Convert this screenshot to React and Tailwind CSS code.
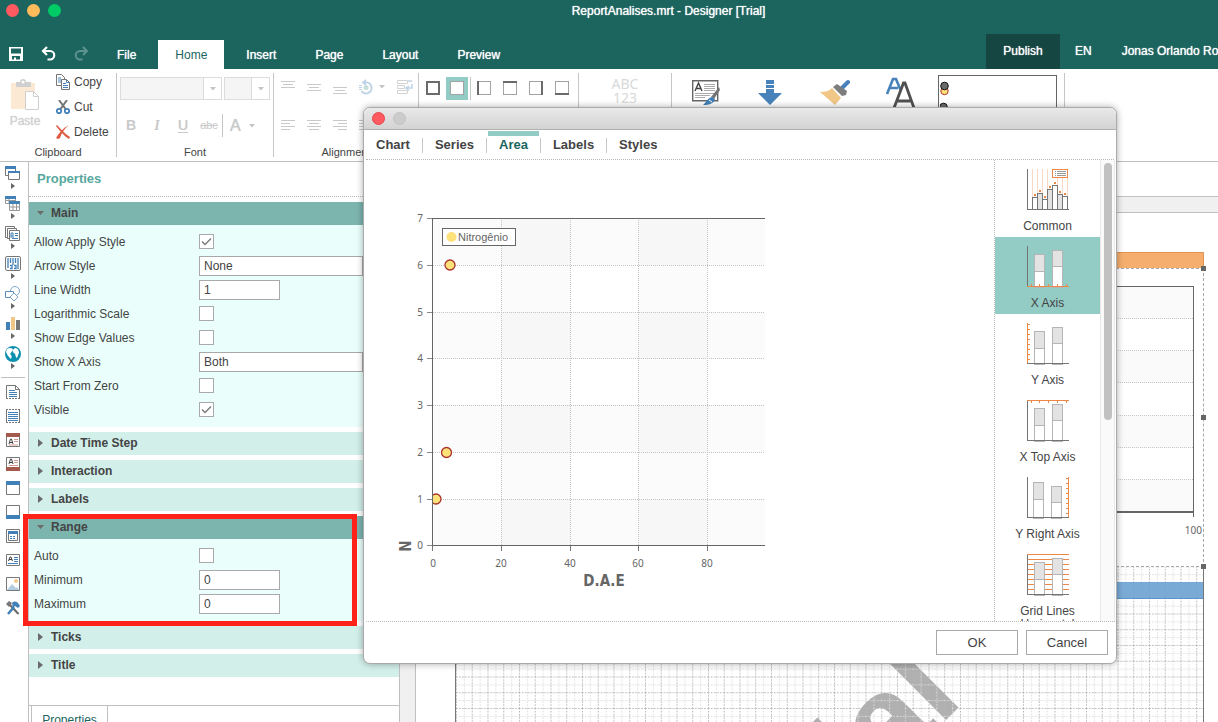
import { useState } from 'react';
import clsx from 'clsx';

const tabs = ['File', 'Home', 'Insert', 'Page', 'Layout', 'Preview'];
const dialogTabs = ['Chart', 'Series', 'Area', 'Labels', 'Styles'];

const sections = [
  {
    title: 'Main',
    open: true,
    rows: [
      { label: 'Allow Apply Style', type: 'check', value: true },
      { label: 'Arrow Style', type: 'select', value: 'None' },
      { label: 'Line Width', type: 'text', value: '1' },
      { label: 'Logarithmic Scale', type: 'check', value: false },
      { label: 'Show Edge Values', type: 'check', value: false },
      { label: 'Show X Axis', type: 'select', value: 'Both' },
      { label: 'Start From Zero', type: 'check', value: false },
      { label: 'Visible', type: 'check', value: true }
    ]
  },
  { title: 'Date Time Step' },
  { title: 'Interaction' },
  { title: 'Labels' },
  {
    title: 'Range',
    open: true,
    rows: [
      { label: 'Auto', type: 'check', value: false },
      { label: 'Minimum', type: 'text', value: '0' },
      { label: 'Maximum', type: 'text', value: '0' }
    ]
  },
  { title: 'Ticks' },
  { title: 'Title' }
];

function Svg({ w, h, children, className }) {
  return (
    <svg width={w} height={h} viewBox={`0 0 ${w} ${h}`} fill="none" className={clsx('shrink-0', className)} aria-hidden="true">
      {children}
    </svg>
  );
}

function Caret({ className }) {
  return (
    <Svg w={6} h={4} className={className}>
      <path d="M0 0h6L3 3.5z" fill="#c4c4c4" />
    </Svg>
  );
}

/* ---------- header ---------- */

function Header() {
  return (
    <header className="shrink-0 bg-[#1b655e] text-xs text-white">
      <div className="flex h-[34px] items-start">
        <div className="flex gap-[8px] pl-[6px] pt-[4px]">
          <span className="size-[13px] rounded-full bg-[#ff5a5f]" />
          <span className="size-[13px] rounded-full bg-[#ffbb5c]" />
          <span className="size-[13px] rounded-full bg-[#00cc66]" />
        </div>
        <h1 className="flex-1 pl-[58px] pt-[3px] text-center [text-shadow:0_0_1px_#ffffff]">ReportAnalises.mrt - Designer [Trial]</h1>
      </div>
      <div className="flex h-[35px] items-stretch">
        <div className="flex w-[100px] items-center gap-[18px] pl-[9px] pt-[4px]">
          <button type="button" aria-label="Save">
            <Svg w={14} h={14}>
              <path d="M0 0h14v14H0z" fill="#fff" />
              <path d="M2 1.500h10v5H2zM3 9h8v3.500H3z" fill="#1b655e" />
              <path d="M5 10.500h2v2.500H5z" fill="#fff" />
            </Svg>
          </button>
          <button type="button" aria-label="Undo">
            <Svg w={15} h={15}>
              <path d="M6 1L2 5l4 4M2 5h7a4 4 0 0 1 0 8.500H6.500" stroke="#fff" strokeWidth="2.200" />
            </Svg>
          </button>
          <button type="button" aria-label="Redo">
            <Svg w={15} h={15}>
              <path d="M9 1l4 4-4 4M13 5H6a4 4 0 0 0 0 8.500h2.500" stroke="#5f938e" strokeWidth="2" />
            </Svg>
          </button>
        </div>
        <nav className="flex gap-[5px] pt-[6px]">
          {tabs.map((tab) => (
            <button
              type="button"
              key={tab}
              className={clsx(
                'px-[17px]',
                tab === 'Home' ? 'bg-white text-[#1b655e]' : '[text-shadow:0_0_1px_#ffffff]'
              )}
            >
              {tab}
            </button>
          ))}
        </nav>
        <div className="ml-auto flex w-[232px] shrink-0 overflow-hidden whitespace-nowrap pb-px [&>button]:[text-shadow:0_0_1px_#ffffff]">
          <button type="button" className="-mb-px w-[74px] shrink-0 bg-[#154641] pb-px">Publish</button>
          <button type="button" className="px-[15px]">EN</button>
          <button type="button" className="pl-[15px]">Jonas Orlando Ro</button>
        </div>
      </div>
    </header>
  );
}

/* ---------- ribbon ---------- */

function Group({ label, className, children }) {
  return (
    <section className={clsx('flex h-[84px] shrink-0 flex-col border-r border-[#c6c6c6]', className)}>
      <div className="flex-1">{children}</div>
      {label && <h2 className="h-[10px] text-center text-[11px] leading-[10px]">{label}</h2>}
    </section>
  );
}

function Lines({ rows }) {
  return (
    <Svg w={14} h={14}>
      {rows.map(([x, y, w]) => (
        <path key={y} d={`M${x} ${y}h${w}v1h${-w}z`} fill="#c9c9c9" shapeRendering="crispEdges" />
      ))}
    </Svg>
  );
}

const valign = [
  [[0, 1, 14], [2, 4, 10], [0, 7, 14]],
  [[0, 4, 14], [2, 7, 10], [0, 10, 14]],
  [[0, 7, 14], [2, 10, 10], [0, 13, 14]]
];
const halign = [
  [[0, 1, 14], [0, 4, 9], [0, 7, 14], [0, 10, 9]],
  [[0, 1, 14], [2, 4, 10], [0, 7, 14], [2, 10, 10]],
  [[0, 1, 14], [5, 4, 9], [0, 7, 14], [5, 10, 9]],
  [[0, 1, 14], [0, 4, 14], [0, 7, 14], [0, 10, 14]]
];

function BorderIcon({ side }) {
  const edges = {
    left: 'M0 0h2v14H0z',
    top: 'M0 0h14v2H0z',
    right: 'M12 0h2v14h-2z',
    bottom: 'M0 12h14v2H0z'
  };
  return (
    <Svg w={14} h={14}>
      <g shapeRendering="crispEdges">
        <path d="M0 0h14v14H0zM1 1v12h12V1z" fill="#a3a3a3" fillRule="evenodd" />
        {side === 'all' && <path d="M0 0h14v14H0zM2 2v10h10V2z" fill="#6b6b6b" fillRule="evenodd" />}
        {side === 'none' && <path d="M1 1h12v12H1z" fill="#fff" />}
        {edges[side] && <path d={edges[side]} fill="#6b6b6b" />}
      </g>
    </Svg>
  );
}

function Ribbon() {
  return (
    <div className="flex h-[93px] shrink-0 overflow-hidden border-b border-[#c0c0c0] bg-white pt-[4px] text-[#444]">
      <Group label="Clipboard" className="w-[117px]">
        <div className="flex">
          <button type="button" disabled className="flex w-[50px] flex-col items-center gap-[2px] pt-[6px] text-xs text-[#d0d0d0]">
            <Svg w={30} h={32}>
              <path d="M1 4h24v26H1z" fill="#fbe9d3" />
              <path d="M6 3h4a3 3 0 0 1 6 0h5v5H6z" fill="#d0d0d0" />
              <circle cx="13" cy="3" r="1.500" fill="#fff" />
              <path d="M15.500 12.500h8l5 5v13h-13z" fill="#fff" stroke="#cfcfcf" />
              <path d="M23.500 12.500v5h5" stroke="#cfcfcf" />
            </Svg>
            <span className="[text-shadow:0_0_1px_#d0d0d0]">Paste</span>
          </button>
          <div className="-mt-[4px] flex flex-col pl-[2px] text-xs">
            <button type="button" className="flex h-[25px] items-center gap-[4px] pl-[4px]">
              <Svg w={14} h={16}>
                <path d="M.5.5h5l3 3v8h-8z" fill="#fff" stroke="#757575" />
                <path d="M2 4h3M2 6h4M2 8h4" stroke="#4a80b8" />
                <path d="M5.500 5.500h5l3 3v7h-8z" fill="#fff" stroke="#757575" />
                <path d="M10.500 5.500v3h3M7 9.500h3M7 11.500h5M7 13.500h5" stroke="#4a80b8" />
              </Svg>
              Copy
            </button>
            <button type="button" className="flex h-[25px] items-center gap-[4px] pl-[4px]">
              <Svg w={14} h={14}>
                <path d="M3 0l6.500 9M11 0L4.500 9" stroke="#757575" strokeWidth="2" />
                <circle cx="3" cy="11" r="2.200" stroke="#4280b8" strokeWidth="1.800" />
                <circle cx="11" cy="11" r="2.200" stroke="#4280b8" strokeWidth="1.800" />
              </Svg>
              Cut
            </button>
            <button type="button" className="flex h-[25px] items-center gap-[4px] pl-[4px]">
              <Svg w={14} h={14}>
                <path d="M1 0c4 4 8 9 13 12l-1 2C8 11 4 6 0 1zM13 0C9 3 6 7 4 13l-2 1-2-1C3 8 7 3 13 0z" fill="#de5b3f" />
              </Svg>
              Delete
            </button>
          </div>
        </div>
      </Group>

      <Group label="Font" className="w-[157px] text-[#c9c9c9] [&>h2]:text-[#444]">
        <div className="flex gap-[2px] pl-[3px] pt-[4px]">
          <button type="button" disabled aria-label="Font name" className="flex h-[23px] w-[102px] border border-[#dcdcdc] bg-[#f5f5f5]">
            <span className="ml-auto flex h-full w-[18px] items-center justify-center border-l border-[#dcdcdc] bg-white"><Caret /></span>
          </button>
          <button type="button" disabled aria-label="Font size" className="flex h-[23px] w-[46px] border border-[#dcdcdc] bg-[#f5f5f5]">
            <span className="ml-auto flex h-full w-[18px] items-center justify-center border-l border-[#dcdcdc] bg-white"><Caret /></span>
          </button>
        </div>
        <div className="flex items-center pl-px pt-[14px] text-sm leading-[23px]">
          <button type="button" disabled className="w-[26px] font-bold">B</button>
          <button type="button" disabled className="w-[26px] font-['Liberation_Serif',serif] font-bold italic">I</button>
          <button type="button" disabled className="w-[26px] underline underline-offset-2 [text-shadow:0_0_1px_#c9c9c9]">U</button>
          <button type="button" disabled className="w-[26px] text-[11px] line-through">abc</button>
          <span className="h-[23px] w-px bg-[#c6c6c6]" />
          <button type="button" disabled className="flex items-center gap-[8px] pl-[7px] text-base leading-[20px] [text-shadow:0_0_1px_#c9c9c9]">
            A <Caret />
          </button>
        </div>
      </Group>

      <Group label="Alignment" className="w-[145px]">
        <div className="flex h-[28px] items-center gap-[12px] pl-[7px]">
          {valign.map((rows, i) => (
            <button type="button" disabled key={i} aria-label={['Top', 'Middle', 'Bottom'][i]}><Lines rows={rows} /></button>
          ))}
          <button type="button" disabled aria-label="Angle" className="flex items-center gap-[6px]">
            <Svg w={14} h={16}>
              <circle cx="7" cy="8.500" r="2.500" fill="#c5e0da" />
              <path d="M6 3.500A5.500 5.500 0 1 1 2.500 12" stroke="#bfd3e6" strokeWidth="2" />
              <path d="M7 0v7L2.500 3.500z" fill="#bfd3e6" />
              <path d="M0 6.500h3M0 8.500h3M0 10.500h3" stroke="#bfd3e6" />
            </Svg>
            <Caret />
          </button>
          <button type="button" disabled aria-label="Word wrap">
            <Svg w={16} h={16}>
              <path d="M.5 1.500h10v3H.5zM.5 6.500h7v3h-7zM.5 11.500h10v3H.5z" stroke="#d3d3d3" />
              <path d="M11 2h4M15 5v4h-5M12 7l-3 2 3 2.500" stroke="#bfd3e6" strokeWidth="1.500" />
            </Svg>
          </button>
        </div>
        <div className="flex gap-[12px] pl-[7px] pt-[18px]">
          {halign.map((rows, i) => (
            <button type="button" disabled key={i} aria-label={['Left', 'Center', 'Right', 'Width'][i]}><Lines rows={rows} /></button>
          ))}
        </div>
      </Group>

      <Group className="w-[160px]">
        <div className="mt-[4px] flex h-[23px] items-center pl-px">
          {['all', 'none', 'left', 'top', 'right', 'bottom'].map((side) => (
            <button
              type="button"
              key={side}
              aria-label={`Border ${side}`}
              className={clsx(
                'flex h-full items-center justify-center pb-px',
                side === 'all' && 'w-[26px]',
                side === 'none' && 'mr-[2px] w-[22px] bg-[#93cbc5]',
                side === 'left' && 'w-[27px] border-l border-[#c6c6c6]',
                ['top', 'right', 'bottom'].includes(side) && 'w-[26px]'
              )}
            >
              <BorderIcon side={side} />
            </button>
          ))}
        </div>
      </Group>

      <Group className="w-[93px]">
        <button type="button" disabled className="flex w-full flex-col items-center pt-[4px] font-['Noto_Sans',sans-serif] text-sm leading-[14px] text-[#d9d9d9]">
          ABC
          <br />
          123
        </button>
      </Group>

      <Group className="w-[393px]">
        <div className="flex pl-px pt-[4px]">
          <button type="button" aria-label="Conditions" className="flex h-[30px] w-[66px] items-center justify-center">
            <Svg w={28} h={26}>
              <path d="M.7 1.700h25v20h-25z" fill="#fff" stroke="#666" strokeWidth="1.400" />
              <path d="M3 12L6.500 4l3.500 8M4.500 9.500h4" stroke="#444" strokeWidth="1.400" />
              <path d="M12 5.500h11M12 7.500h11M12 9.500h11M12 11.500h11M3 14.500h20M3 16.500h15M3 18.500h10" stroke="#aaa" />
              <path d="M27 8l1 3-6 9-3-2z" fill="#757575" />
              <path d="M20 18l3 2c-1 4-5 6-12 6 3-2 4-7 9-8z" fill="#4280b8" />
              <path d="M17 21l3 2" stroke="#fff" />
            </Svg>
          </button>
          <button type="button" aria-label="Data" className="flex h-[30px] w-[62px] items-center justify-center">
            <Svg w={24} h={26}>
              <path d="M8 1h8v4H8zM8 6h8v3H8zM8 10h8v4h8L12 26 0 14h8z" fill="#4882ba" />
            </Svg>
          </button>
          <button type="button" aria-label="Copy style" className="flex h-[30px] w-[68px] items-center justify-center">
            <Svg w={30} h={26}>
              <path d="M22 9l6-6" stroke="#4882ba" strokeWidth="4" strokeLinecap="round" />
              <path d="M12 9l9 10-6 7L0 13c5 0 9-1 12-4z" fill="#f0c787" />
              <path d="M13 8l4-3 10 7-1 4-4 1z" fill="#7d7d7d" />
            </Svg>
          </button>
          <button type="button" aria-label="Style designer" className="flex h-[30px] w-[63px] items-center justify-center">
            <Svg w={32} h={30}>
              <path d="M2 17L8 2h3l5 12M4 11h9" stroke="#4882ba" strokeWidth="2.600" />
              <path d="M9 31L18.500 6h1.500L29 31M12 24h14" stroke="#505050" strokeWidth="2.800" />
            </Svg>
          </button>
          <div className="-mt-[2px] ml-[6px] h-[60px] w-[119px] border border-[#666] pl-px pt-[5px]">
            <Svg w={12} h={40}>
              <circle cx="4.500" cy="10" r="3.700" fill="#ffe17a" stroke="#b0302a" />
              <circle cx="4.500" cy="5" r="3.800" fill="#6b6b6b" stroke="#111" />
              <circle cx="3.500" cy="26" r="3.800" fill="#6b6b6b" stroke="#111" />
            </Svg>
          </div>
        </div>
      </Group>
    </div>
  );
}

/* ---------- left toolbox ---------- */

const blue = '#4280b8';
const toolGroups = [
  ['Bands', <><path d="M.5.5h10v9H.5z" fill="#fff" stroke="#777" /><path d="M0 0h11v3H0z" fill={blue} /><path d="M3.500 5.500h11v8h-11z" fill="#fff" stroke="#777" /><path d="M3 5h12v2H3z" fill={blue} /></>],
  ['Cross bands', <><path d="M.5.500h10v7H.5zM.5 4.500h10M4 3v5" fill="#fff" stroke="#999" /><path d="M0 0h11v3H0z" fill={blue} /><path d="M4.500 6.500h10v8h-10zM4.500 11h10M8 8v6M11.500 8v6" fill="#fff" stroke="#999" /><path d="M4 5h11v3H4z" fill={blue} /></>],
  ['Components', <><path d="M.5.500h9v11h-9z" fill="#fff" stroke="#777" /><path d="M2.500 2.500h9v10h-9z" fill="#fff" stroke="#777" /><path d="M4.500 4.500h10v10h-10z" fill="#fff" stroke="#777" /><path d="M6 12V7h2v5M6 10h2M10 7.500h3M10 9.500h3M7 12.500h6" stroke={blue} /></>],
  ['Bar codes', <><rect x=".5" y=".5" width="15" height="14" rx="1.500" fill="#fff" stroke="#777" /><path d="M3 2v10M5.500 2v5M8 2v7M10.500 2v5M13 2v11M5 9.500h2v3H5M9 9.500h2v3H9" stroke={blue} strokeWidth="1.300" /></>],
  ['Shapes', <><circle cx="10" cy="5" r="4.500" fill="#fff" stroke="#7fa5cc" /><path d="M.5 5.500h8v6h-8z" fill="#fff" stroke="#5b8cbe" /><path d="M9 7l4 4-4 4-4-4z" fill="#fff" stroke="#7fa5cc" /></>],
  ['Charts', <><path d="M1 6h4v8H1z" fill={blue} /><path d="M6 1h4v13H6z" fill="#f0c787" /><path d="M11 4h4v10h-4z" fill="#777" /></>],
  ['Maps', <><circle cx="8" cy="8" r="8" fill="#0b8fae" /><path d="M2 3c3-2 6-1 6 1L5 8c2 1 2 3 1 5C3 11 2 8 1 6zM10 2c3 0 4 3 4 5l-2 5c-2-1-1-4-3-5s-1-4 1-5z" fill="#fff" /></>]
];

const page = (edge, fill) => <><path d="M.5.500h13v13H.5z" fill="#fff" stroke="#777" /><path d={edge} fill={fill} /></>;
const tools = [
  ['Report title', <><path d="M.5 13V.5h9l4 4V13" fill="#fff" stroke="#777" /><path d="M9.500.5v4h4" stroke="#777" /><path d="M0 13.500h14" stroke="#777" strokeDasharray="2 1" /><path d="M3 5.500h6M3 7.500h8M3 9.500h8M3 11.500h8" stroke={blue} /></>],
  ['Data band', <><path d="M.5 1v12M13.500 1v12" stroke="#777" /><path d="M0 .5h14M0 13.500h14" stroke="#777" strokeDasharray="2 1" /><path d="M2 3.500h10M2 5.500h10M2 7.500h10M2 9.500h10M2 11.500h10" stroke={blue} /></>],
  ['Header band', <><path d="M.5.500h13v13H.5z" fill="#fff" stroke="#777" /><path d="M0 0h14v4H0z" fill="#a3594c" /><path d="M3 11l1.500-5h1L7 11M3 9.500h4" stroke="#444" /><path d="M8 6.500h4M8 8.500h4M3 12h9" stroke="#d39a90" /></>],
  ['Footer band', <><path d="M.5.500h13v13H.5z" fill="#fff" stroke="#777" /><path d="M0 10h14v4H0z" fill="#a3594c" /><path d="M3 7l1.500-5h1L7 7M3 5.500h4" stroke="#444" /><path d="M8 3.500h4M8 5.500h4M3 8.500h9" stroke="#d39a90" /></>],
  ['Page header', page('M0 0h14v4H0z', blue)],
  ['Page footer', page('M0 10h14v4H0z', blue)],
  ['Panel', <><path d="M.5.500h13v13H.5z" fill="#fff" stroke="#777" /><path d="M2.500 2.500h9v9h-9z" stroke="#777" /><path d="M2 2h10v3H2z" fill={blue} /><path d="M4 7.500h6M4 9.500h6" stroke={blue} strokeDasharray="2 1" /></>],
  ['Text', <><path d="M.5 1.500h13v11H.5z" fill="#fff" stroke="#777" /><path d="M2.500 8L4 4h1l1.500 4M3 6.500h3" stroke="#444" /><path d="M8 4.500h4M8 6.500h4M8 8.500h4M2 10.500h10" stroke={blue} /></>],
  ['Image', <><path d="M.5.500h13v13H.5z" fill="#fff" stroke="#777" /><circle cx="10" cy="4" r="2" fill="#f0c787" /><path d="M1 13l5-6 4 4 1-1 2 3z" fill="#b5cde3" /></>],
  ['Tools', <><path d="M3 3l9.500 10" stroke="#666" strokeWidth="2" /><path d="M0 3l3-3 3 2-3 4z" fill="#777" /><path d="M6 2c3-3 6-1 8 3l-2 2-3-2-2 2z" fill={blue} /><path d="M8 6l-6 7" stroke={blue} strokeWidth="2.500" /></>]
];

function Toolbox() {
  return (
    <aside className="flex w-[29px] shrink-0 flex-col border-r border-[#c0c0c0] bg-white">
      {toolGroups.map(([name, icon]) => (
        <button type="button" key={name} aria-label={name} className="flex h-[30px] shrink-0 flex-col items-center gap-px pr-[2px] pt-[4px]">
          <Svg w={16} h={16}>{icon}</Svg>
          <Svg w={4} h={6}><path d="M0 0l4 3-4 3z" fill="#666" /></Svg>
        </button>
      ))}
      <hr className="mb-[2px] ml-px mr-[3px] mt-[5px] border-[#c0c0c0]" />
      {tools.map(([name, icon]) => (
        <button type="button" key={name} aria-label={name} className="flex h-[24px] shrink-0 items-center justify-center pr-[2px]">
          <Svg w={14} h={14}>{icon}</Svg>
        </button>
      ))}
    </aside>
  );
}

/* ---------- property grid ---------- */

function Field({ id, row }) {
  const [value, setValue] = useState(row.value);
  const box = 'h-[20px] border border-[#a9a9a9] bg-white pl-[4px] text-xs text-[#444]';

  if (row.type === 'check') {
    return (
      <span className="relative h-[16px] w-[15px]">
        <input
          id={id}
          type="checkbox"
          checked={value}
          onChange={(e) => setValue(e.target.checked)}
          className="block size-[15px] appearance-none border border-[#a9a9a9] bg-white"
        />
        {value && (
          <Svg w={15} h={15} className="pointer-events-none absolute left-0 top-0">
            <path d="M3 7.500l3 3L12 4.500" stroke="#777" strokeWidth="1.300" />
          </Svg>
        )}
      </span>
    );
  }
  if (row.type === 'select') {
    return (
      <select id={id} defaultValue={value} className={clsx(box, 'w-[164px] appearance-none')}>
        <option>{value}</option>
      </select>
    );
  }
  return <input id={id} type="text" value={value} onChange={(e) => setValue(e.target.value)} className={clsx(box, 'w-[81px]')} />;
}

function Properties() {
  return (
    <aside className="flex w-[370px] shrink-0 flex-col bg-white text-xs text-[#444]">
      <h2 className="border-b border-dotted border-[#b8b8b8] pl-[8px] text-[13px] font-bold leading-[34px] text-[#58a89f]">Properties</h2>
      <div className="flex flex-1 flex-col gap-[5px] pt-[5px]">
        {sections.map((section) => (
          <section key={section.title}>
            <h3>
              <button
                type="button"
                aria-expanded={!!section.open}
                className={clsx(
                  'flex h-[23px] w-full items-center pb-px pl-[8px] text-left font-bold',
                  section.open ? 'bg-[#7cb4ae]' : 'bg-[#d2efea]'
                )}
              >
                <span className="w-[14px]">
                  <Svg w={8} h={8}>
                    <path d={section.open ? 'M0 2h7L3.500 6z' : 'M1 0l5 4-5 4z'} fill="#6b6b6b" />
                  </Svg>
                </span>
                {section.title}
              </button>
            </h3>
            {section.rows && (
              <div className="bg-[#eafffc] py-[5px] pl-[5px]">
                {section.rows.map((row) => (
                  <div key={row.label} className="flex h-[24px] items-center">
                    <label htmlFor={row.label} className="w-[165px]">{row.label}</label>
                    <Field id={row.label} row={row} />
                  </div>
                ))}
              </div>
            )}
          </section>
        ))}
      </div>
      <div className="flex h-[17px] overflow-hidden border-t border-[#c0c0c0] pl-[2px]">
        <button type="button" className="h-[28px] w-[77px] border-x border-[#c0c0c0] text-[#1b655e]">Properties</button>
      </div>
    </aside>
  );
}

/* ---------- report canvas ---------- */

function Handle({ className }) {
  return <span className={clsx('absolute -right-[3px] size-[5px] bg-[#666]', className)} />;
}

function Canvas() {
  return (
    <main className="flex min-w-0 flex-1 flex-col bg-white">
      <div className="h-[35px] shrink-0 border-b border-[#c0c0c0]" />
      <div className="h-[16px] shrink-0 border-b border-[#c0c0c0] bg-[#f0f0f0]" />
      <div className="flex min-h-0 flex-1">
        <div className="w-[17px] shrink-0 border-x border-[#c0c0c0] bg-[#f0f0f0]" />
        <div className="flex min-w-0 flex-1 pl-[39px] pr-[14px] pt-[39px]">
          <div className="relative flex-1 border-x border-[#777]">
            <svg className="absolute inset-0 size-full overflow-hidden" aria-hidden="true">
              <defs>
                <pattern id="grid" width="15.750" height="15.750" patternUnits="userSpaceOnUse" y="15">
                  <path d="M0 .5h15.750M.5 0v15.750" stroke="#b4b4b4" strokeDasharray="1.500 1.500" />
                  <path d="M0 8.400h15.750M8.400 0v15.750" stroke="#dcdcdc" strokeDasharray="1.500 1.500" />
                </pattern>
              </defs>
              <text
                textAnchor="end"
                transform="translate(509 449) rotate(-45)"
                fill="#b0b0b0"
                className="font-['Liberation_Sans',sans-serif] text-[128px] font-bold"
              >
                Trial
              </text>
              <rect width="100%" height="100%" fill="url(#grid)" />
            </svg>
            <div className="relative -mr-px h-[16px] border border-b-0 border-[#e2954f] bg-[#f5ae6e]" />
            <div className="relative -mr-px h-[299px] border border-dashed border-[#a8a8a8] bg-white pr-[9px] pt-[17px] font-['Noto_Sans',sans-serif] text-[10px] text-[#666]">
              <div className="flex h-[227px] flex-col border border-b-2 border-[#666]">
                {[0, 1, 2, 3, 4, 5, 6].map((i) => (
                  <div key={i} className={clsx('flex-1', i % 2 === 0 && 'bg-[#fafafa]', i < 6 && 'border-b border-dotted border-[#c6c6c6]')} />
                ))}
              </div>
              <div className="ml-auto h-[4px] border-r border-[#666]" />
              <p className="-mr-[8px] pt-[6px] text-right">100</p>
              <Handle className="-top-[3px]" />
              <Handle className="top-[146px]" />
              <Handle className="-bottom-[3px]" />
            </div>
            <div className="relative mt-[15px] h-[17px] border-b border-[#5e94c8] bg-[#6ca2d3]/90" />
          </div>
        </div>
      </div>
    </main>
  );
}

/* ---------- chart editor dialog ---------- */

const X = [433, 501, 570, 638, 707].map((x) => x - 364);
const Y = [218, 265, 312, 358, 405, 452, 499, 545].map((y) => y - 160);

function ScatterChart() {
  return (
    <svg width="402" height="450" fill="none" className="shrink-0 font-['Noto_Sans',sans-serif]" role="img" aria-label="Nitrogênio">
      <defs>
        <clipPath id="plot"><rect x="69" y="58" width="332" height="328" /></clipPath>
      </defs>
      <g shapeRendering="crispEdges">
        {[0, 2, 4, 6].map((i) => <rect key={i} x="69" y={Y[i]} width="332" height="47" fill="#000" fillOpacity=".016" />)}
        <rect x={X[1]} y="58" width="69" height="328" fill="#000" fillOpacity=".016" />
        <rect x={X[3]} y="58" width="69" height="328" fill="#000" fillOpacity=".016" />
        {Y.slice(1, 7).map((y) => <path key={y} d={`M69 ${y + 0.5}H401`} stroke="#c4c4c4" strokeDasharray="1 1" />)}
        {X.slice(1).map((x) => <path key={x} d={`M${x + 0.5} 58V386`} stroke="#c4c4c4" strokeDasharray="1 1" />)}
        {Y.map((y) => <path key={y} d={`M63 ${y + 0.5}h5`} stroke="#888" />)}
        {X.map((x, i) => <path key={x} d={`M${(i ? x : 68) + 0.5} 386v5`} stroke="#777" />)}
        <path d="M68.500 386V58.500H401M68 385.500H401" stroke="#666" />
      </g>
      <g clipPath="url(#plot)" fill="#ffe17a" stroke="#a8322c" strokeWidth="1.300">
        <circle cx="86" cy="105" r="5" />
        <circle cx="82.500" cy="292.500" r="5" />
        <circle cx="72" cy="339" r="5" />
      </g>
      <rect x="78.500" y="68.500" width="73" height="17" fill="#fff" stroke="#666" />
      <circle cx="87.500" cy="77" r="5" fill="#ffe17a" />
      <text x="94" y="81" fill="#666" className="font-['Liberation_Sans',sans-serif] text-[11px]">Nitrogênio</text>
      <g fill="#666" className="text-[10px]">
        {Y.map((y, i) => <text key={y} x="59" y={y + 4} textAnchor="end">{7 - i}</text>)}
        {X.map((x, i) => <text key={x} x={x} y="407" textAnchor="middle">{i * 20}</text>)}
      </g>
      <g fill="#666" className="font-['DejaVu_Sans_Condensed','DejaVu_Sans',sans-serif] text-[15px] font-bold">
        <text x="240" y="426" textAnchor="middle">D.A.E</text>
        <text transform="translate(47 386) rotate(-90)" textAnchor="middle">N</text>
      </g>
    </svg>
  );
}

const or = '#ec8846';
const bars = (a, b) => (
  <g stroke="#b5b5b5" shapeRendering="crispEdges">
    <path d={`M${a[0]}.5 ${a[1]}.5h10V41h-10z`} fill="#fff" />
    <path d={`M${a[0]}.5 ${a[1]}.5h10v17h-10z`} fill="#e3e3e3" />
    <path d={`M${b[0]}.5 ${b[1]}.5h10V41h-10z`} fill="#fff" />
    <path d={`M${b[0]}.5 ${b[1]}.5h10v16h-10z`} fill="#e3e3e3" />
  </g>
);

const areaItems = [
  ['Common', (
    <>
      <path d="M5.500 0v41M10.500 0v41M15.500 0v41M20.500 0v41M30.500 0v41M35.500 0v41M40.500 0v41" stroke="#f8d8c4" />
      <g stroke="#757575">
        <path d="M5.500 41V28.500h5V41M15.500 41V30.500h5V41M25.500 41V16.500h5V41M35.500 41V27.500h5V41" fill="#fff" />
        <path d="M10.500 41V24.500h5V41M20.500 41V20.500h5V41M30.500 41V25.500h5V41" fill="#e3e3e3" />
        <path d="M.5 0v40.500H42" />
      </g>
      <path d="M7 25h2v2H7zM12 21h2v2h-2zM17 27h2v2h-2zM22 17h2v2h-2zM27 13h2v2h-2zM32 22h2v2h-2zM37 24h2v2h-2z" fill={or} />
      <path d="M25.500.5h15v8h-15z" fill="#fff" stroke={or} />
      <path d="M28 2.500h1M30 2.500h9M28 4.500h1M30 4.500h9M28 6.500h1M30 6.500h9" stroke="#999" />
    </>
  )],
  ['X Axis', (
    <>
      <path d="M.5 0v40" stroke="#757575" />
      {bars([7, 8], [25, 4])}
      <path d="M0 40.500h42M4.500 38v2M12.500 38v2M21.500 38v2M30.500 38v2M39.500 38v2" stroke={or} />
    </>
  )],
  ['Y Axis', (
    <>
      {bars([7, 8], [25, 4])}
      <path d="M0 40.500h42" stroke="#757575" />
      <path d="M.5 0v40M0 1.500h3M0 6.500h3M0 11.500h3M0 16.500h3M0 21.500h3M0 26.500h3M0 31.500h3M0 36.500h3" stroke={or} />
    </>
  )],
  ['X Top Axis', (
    <>
      {bars([7, 8], [25, 4])}
      <path d="M.5 0v40.500H42" stroke="#757575" />
      <path d="M0 .5h42M4.500 0v3M12.500 0v3M21.500 0v3M30.500 0v3M39.500 0v3" stroke={or} />
    </>
  )],
  ['Y Right Axis', (
    <>
      {bars([6, 5], [24, 9])}
      <path d="M.5 0v40.500H42" stroke="#757575" />
      <path d="M41.500 0v40M39 1.500h3M39 6.500h3M39 11.500h3M39 16.500h3M39 21.500h3M39 26.500h3M39 31.500h3M39 36.500h3" stroke={or} />
    </>
  )],
  ['Grid Lines Horizontal', (
    <>
      <path d="M0 .5h42M0 5.500h42M0 10.500h42M0 15.500h42M0 20.500h42M0 25.500h42M0 30.500h42M0 35.500h42" stroke={or} />
      {bars([7, 8], [25, 4])}
      <path d="M.5 1v39.500H42" stroke="#757575" />
    </>
  )]
];

function ChartDialog() {
  return (
    <div
      role="dialog"
      aria-label="Chart"
      className="absolute left-[363px] top-[107px] flex h-[557px] w-[754px] flex-col overflow-hidden rounded-[7px] border border-[#aaa] bg-white text-[#444] shadow-[0_0_7px_#00000055]"
    >
      <div className="flex h-[22px] shrink-0 items-center gap-[8px] border-b border-[#b0b0b0] bg-linear-to-b from-[#e9e9e9] to-[#d3d3d3] pl-[8px]">
        <button type="button" aria-label="Close" className="size-[13px] rounded-full border border-[#e2484e] bg-[#ff5a5f]" />
        <button type="button" aria-label="Minimize" className="size-[13px] rounded-full border border-[#c2c2c2] bg-[#cccccc]" />
      </div>
      <div className="mx-[2px] flex h-[30px] shrink-0 items-start border-b border-dotted border-[#b8b8b8] pt-px text-[13px] font-bold">
        {dialogTabs.map((tab, i) => (
          <div key={tab} className="flex items-center">
            {i > 0 && <span className="mx-px h-[15px] w-px bg-[#c6c6c6]" />}
            <button
              type="button"
              className={clsx(
                'border-t-[5px] px-[11px] pb-[5px] leading-[18px]',
                i === 0 && 'pl-[10px]',
                tab === 'Area' ? 'border-[#93cbc5] text-[#1b655e]' : 'border-transparent'
              )}
            >
              {tab}
            </button>
          </div>
        ))}
      </div>
      <div className="ml-[2px] mr-px flex min-h-0 flex-1 border-b border-dotted border-[#b8b8b8]">
        <div className="-ml-[2px] flex-1"><ScatterChart /></div>
        <div className="w-[106px] overflow-hidden border-l border-dotted border-[#b8b8b8]">
          {areaItems.map(([label, icon]) => (
            <button
              type="button"
              key={label}
              className={clsx(
                'flex h-[77px] w-full flex-col items-center px-[20px] pt-[9px] text-xs leading-[13px]',
                label === 'X Axis' && 'bg-[#93cbc5]'
              )}
            >
              <Svg w={42} h={42}><g shapeRendering="crispEdges">{icon}</g></Svg>
              <span className="-mx-[16px] max-w-[80px] pt-[9px]">{label}</span>
            </button>
          ))}
        </div>
        <div className="w-[15px] border-x border-[#e8e8e8] bg-[#fafafa] px-[3px] pt-[3px]">
          <div className="h-[257px] w-[8px] rounded-full bg-[#c1c1c1]" />
        </div>
      </div>
      <div className="flex h-[41px] shrink-0 items-center justify-end gap-[8px] pr-[8px] text-[13px]">
        <button type="button" className="h-[25px] w-[82px] border border-[#a9a9a9]">OK</button>
        <button type="button" className="h-[25px] w-[82px] border border-[#a9a9a9]">Cancel</button>
      </div>
    </div>
  );
}

export default function App() {
  return (
    <div className="relative flex h-screen flex-col overflow-hidden bg-white font-['Liberation_Sans',Arial,sans-serif]">
      <Header />
      <Ribbon />
      <div className="flex min-h-0 flex-1">
        <Toolbox />
        <Properties />
        <Canvas />
      </div>
      <ChartDialog />
      <div className="pointer-events-none absolute left-[23px] top-[514px] h-[112px] w-[334px] border-[5px] border-[#ff2218]" />
    </div>
  );
}
